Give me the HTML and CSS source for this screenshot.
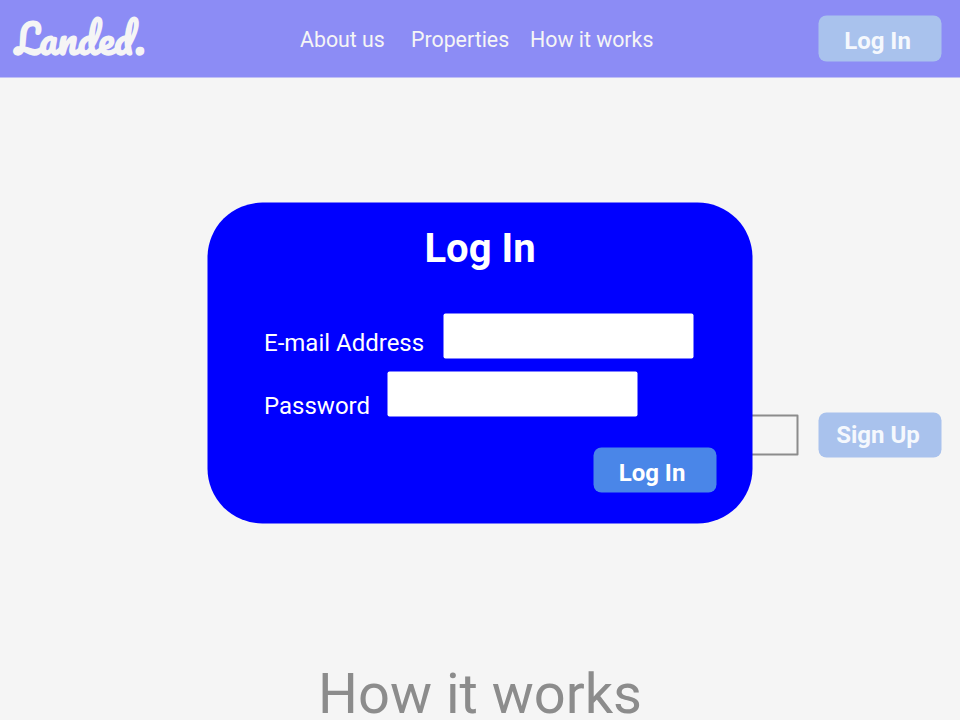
FILE: index.html
```html
<!DOCTYPE html>
<html lang="en">
<head>
<meta charset="utf-8">
<title>Landed.</title>
<link rel="stylesheet" href="styles.css">
</head>
<body>
<header class="topbar">
  <a class="logo"><span class="initial">L</span>anded.</a>
  <nav class="nav"><a class="about">About us</a><a class="properties">Properties</a><a>How it works</a></nav>
  <button class="button muted header-login">Log In</button>
</header>
<main>
  <section class="signup">
    <input class="signup-input" type="text" aria-label="Email">
    <button class="button muted signup-button">Sign Up</button>
  </section>
  <h2 class="section-title">How it works</h2>
</main>
<form class="modal">
  <h1 class="modal-title">Log In</h1>
  <div class="field email"><label for="email">E-mail Address</label><input id="email" type="email"></div>
  <div class="field password"><label for="password">Password</label><input id="password" type="password"></div>
  <button class="button modal-login" type="button">Log In</button>
</form>
</body>
</html>
```
FILE: styles.css
```css
* { box-sizing: border-box; }
body {
  margin: 0;
  height: 720px;
  overflow: hidden;
  position: relative;
  background: #f5f5f5;
  font-family: Roboto, sans-serif;
}
.topbar {
  display: flex;
  height: 78px;
  border-bottom: 1px solid #c0c0f5;
  background: #8c8cf5;
  color: #f5f5f5;
}
.logo {
  width: 300px;
  padding: 14px 0 0 15px;
  font: bold 40px/48px Pacifico, Lato, sans-serif;
}
.initial {
  display: inline-block;
  margin-right: -3px;
  transform: scaleX(.88);
  transform-origin: left;
}
.nav {
  display: flex;
  width: 519px;
  padding-top: 24px;
  font-size: 21.333px;
  line-height: 32px;
  white-space: nowrap;
}
.about { width: 111px; }
.properties { width: 119px; }
.button {
  width: 123px;
  height: 45px;
  padding: 5px 6px 0 0;
  border: 0;
  border-radius: 8px;
  background: #4a86e8;
  color: #fff;
  font: bold 24px/28px Roboto, sans-serif;
}
.muted { background: #a9c2ed; color: #f5f8fd; }
.header-login {
  height: 46px;
  margin-top: 16px;
  padding: 3px 5px 0 0;
  transform: translate(-.5px, -.5px);
}
.signup {
  display: flex;
  justify-content: flex-end;
  padding: 335px 18px 0 0;
  transform: translate(-.5px, -.5px);
}
.signup-input {
  width: 400px;
  height: 41px;
  margin: 2px 20px 0 0;
  border: 2px solid #8c8c8c;
  border-radius: 1px;
  background: #f5f5f5;
}
.signup-button { padding: 0 4px 2px 0; }
.section-title {
  margin: 204px 0 0;
  color: #8c8c8c;
  font-size: 56px;
  font-weight: 400;
  line-height: 64px;
  text-align: center;
}
.modal {
  position: absolute;
  top: 203px;
  left: 208px;
  display: flex;
  flex-direction: column;
  width: 545px;
  height: 321px;
  padding: 22px 36px 31px 56px;
  border-radius: 55px;
  background: #00f;
  color: #fff;
  transform: translate(-.5px, -.5px);
}
.modal-title {
  margin: 0 -36px 0 -56px;
  font-size: 40px;
  line-height: 48px;
  text-align: center;
}
.field {
  display: flex;
  height: 45px;
  font-size: 24px;
  line-height: 28px;
  white-space: nowrap;
}
.field input {
  width: 250px;
  height: 45px;
  border: 0;
  border-radius: 2px;
  background: #fff;
}
.email { margin-top: 41px; }
.email label { width: 180px; padding: 15px 0 0 .5px; }
.password { margin-top: 13px; }
.password label { width: 124px; padding: 20px 0 0 .5px; }
.modal-login { margin: 31px 0 0 auto; }
```
